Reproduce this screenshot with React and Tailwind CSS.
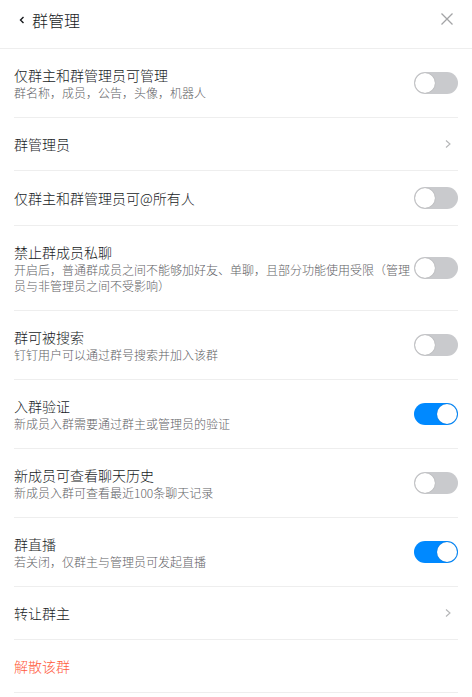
import { useState } from 'react';

const rows = [
  { type: 'toggle', title: '仅群主和群管理员可管理', desc: '群名称，成员，公告，头像，机器人', on: false },
  { type: 'link', title: '群管理员' },
  { type: 'toggle', title: '仅群主和群管理员可@所有人', on: false },
  {
    type: 'toggle',
    title: '禁止群成员私聊',
    desc: '开启后，普通群成员之间不能够加好友、单聊，且部分功能使用受限（管理员与非管理员之间不受影响）',
    on: false,
  },
  { type: 'toggle', title: '群可被搜索', desc: '钉钉用户可以通过群号搜索并加入该群', on: false },
  { type: 'toggle', title: '入群验证', desc: '新成员入群需要通过群主或管理员的验证', on: true },
  { type: 'toggle', title: '新成员可查看聊天历史', desc: '新成员入群可查看最近100条聊天记录', on: false },
  { type: 'toggle', title: '群直播', desc: '若关闭，仅群主与管理员可发起直播', on: true },
  { type: 'link', title: '转让群主' },
  { type: 'danger', title: '解散该群' },
];

function Toggle({ on, onClick }) {
  return (
    <button
      onClick={onClick}
      className={`relative shrink-0 w-[44px] h-[22px] rounded-full transition-colors ${
        on ? 'bg-[#0089ff]' : 'bg-[#c9cacd]'
      }`}
    >
      <span
        className={`absolute top-[1px] w-[20px] h-[20px] rounded-full bg-white shadow-[0_0_1px_rgba(0,0,0,0.35)] transition-all ${
          on ? 'left-[23px]' : 'left-[1px]'
        }`}
      />
    </button>
  );
}

function Chevron() {
  return (
    <svg width="8" height="10" viewBox="0 0 8 10" className="shrink-0 mr-[6px]">
      <polyline points="2,1.5 6,5 2,8.5" fill="none" stroke="#b4b5b7" strokeWidth="1.1" />
    </svg>
  );
}

export default function App() {
  const [state, setState] = useState(rows.map((r) => !!r.on));

  const flip = (i) => setState((s) => s.map((v, j) => (j === i ? !v : v)));

  return (
    <div
      className="w-[472px] min-h-[697px] bg-white text-[#171a1d] font-light"
      style={{ fontFamily: '"Noto Sans CJK SC", "Noto Sans", sans-serif' }}
    >
      <div className="h-[49px] border-b border-[#eeeeee] flex items-start justify-between pt-[8px] pl-[19px] pr-[18px]">
        <div className="flex items-center gap-[7px]">
          <svg width="6" height="8" viewBox="0 0 6 8">
            <polyline points="4.5,1 1.5,4 4.5,7" fill="none" stroke="#171a1d" strokeWidth="1.4" />
          </svg>
          <span className="text-[16px] leading-[24px]">群管理</span>
        </div>
        <svg width="14" height="14" viewBox="0 0 14 14" className="mt-[4px]">
          <path d="M1.5 1.5 L12.5 12.5 M12.5 1.5 L1.5 12.5" stroke="#a3a4a6" strokeWidth="1.3" />
        </svg>
      </div>

      <div className="px-[14px]">
        {rows.map((r, i) => (
          <div key={i} className="flex items-center gap-1 py-[16px] border-b border-[#eeeeee]">
            <div className="flex-1 min-w-0">
              <div
                className={`text-[14px] leading-[20px] ${r.type === 'danger' ? 'text-[#ff5b3b]' : ''}`}
              >
                {r.title}
              </div>
              {r.desc && <div className="text-[12px] leading-[16px] text-[#5f6266]">{r.desc}</div>}
            </div>
            {r.type === 'toggle' && <Toggle on={state[i]} onClick={() => flip(i)} />}
            {r.type === 'link' && <Chevron />}
          </div>
        ))}
      </div>
    </div>
  );
}
